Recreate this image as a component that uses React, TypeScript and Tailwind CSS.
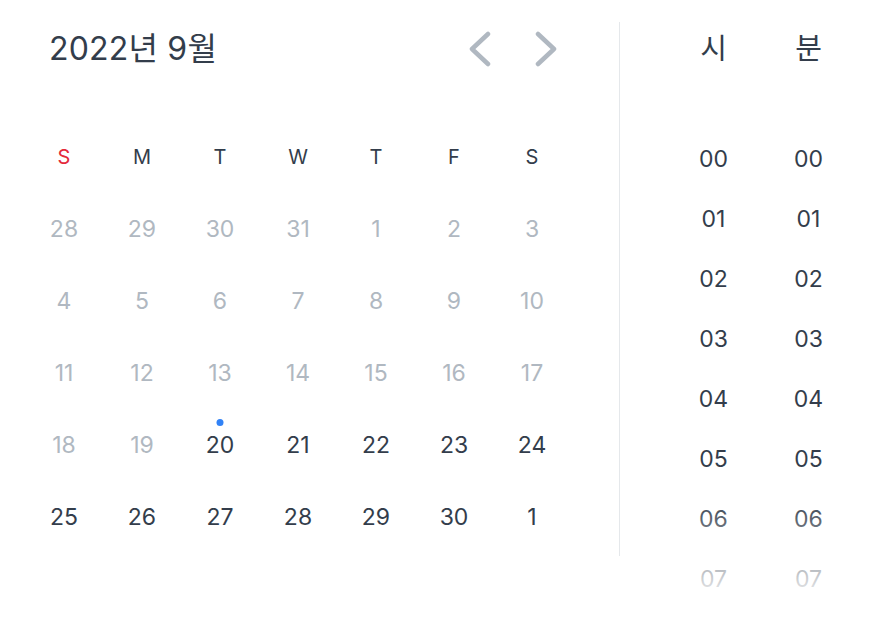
import React from "react";

const weekdays = ["S", "M", "T", "W", "T", "F", "S"];
const rows: { d: number; muted: boolean }[][] = [
  [28, 29, 30, 31, 1, 2, 3].map((d) => ({ d, muted: true })),
  [4, 5, 6, 7, 8, 9, 10].map((d) => ({ d, muted: true })),
  [11, 12, 13, 14, 15, 16, 17].map((d) => ({ d, muted: true })),
  [18, 19, 20, 21, 22, 23, 24].map((d, i) => ({ d, muted: i < 2 })),
  [25, 26, 27, 28, 29, 30, 1].map((d) => ({ d, muted: false })),
];
const times = ["00", "01", "02", "03", "04", "05", "06", "07"];

const font = { fontFamily: "Inter, 'Noto Sans CJK KR', sans-serif" };

export default function App() {
  return (
    <div className="relative h-[644px] w-[878px] overflow-hidden bg-white text-[#333d4b]" style={font}>
      <div className="flex">
        {/* Calendar */}
        <div className="w-[619px] pl-[25px] pt-[22px]">
          <div className="flex h-[54px] w-[546px] items-center">
            <div className="pl-[24px] text-[32px] tracking-[0.2px]">2022년 9월</div>
            <div className="ml-auto flex items-center gap-[44px] pr-[14px]">
              <svg width="22" height="36" viewBox="0 0 22 36" fill="none">
                <path d="M19 3 L3 18 L19 33" stroke="#b0b8c1" strokeWidth="4.5" strokeLinecap="round" strokeLinejoin="round" />
              </svg>
              <svg width="22" height="36" viewBox="0 0 22 36" fill="none">
                <path d="M3 3 L19 18 L3 33" stroke="#b0b8c1" strokeWidth="4.5" strokeLinecap="round" strokeLinejoin="round" />
              </svg>
            </div>
          </div>
          <div className="h-[45px]" />
          <div className="grid w-[546px] grid-cols-7">
            {weekdays.map((w, i) => (
              <div
                key={i}
                className={`flex h-[72px] items-center justify-center text-[20px] ${i === 0 ? "text-[#e42939]" : "text-[#333d4b]"}`}
              >
                {w}
              </div>
            ))}
            {rows.flat().map((c, i) => (
              <div
                key={i}
                className={`relative flex h-[72px] items-center justify-center text-[23px] ${c.muted ? "text-[#b0b8c1]" : "text-[#333d4b]"}`}
              >
                {c.d === 20 && !c.muted && (
                  <span className="absolute left-1/2 top-[10px] h-[7px] w-[7px] -translate-x-1/2 rounded-full bg-[#3182f6]" />
                )}
                {c.d}
              </div>
            ))}
          </div>
        </div>
        {/* Divider */}
        <div className="mt-[22px] h-[534px] w-px bg-[#e5e8eb]" />
        {/* Time */}
        <div className="relative flex pl-[46px] pt-[22px]">
          {["시", "분"].map((h) => (
            <div key={h} className="flex w-[95px] flex-col items-center">
              <div className="flex h-[54px] items-center text-[29px]">{h}</div>
              <div className="h-[53px]" />
              {times.map((t) => (
                <div key={t} className="flex h-[60px] items-center text-[23px]">
                  {t}
                </div>
              ))}
            </div>
          ))}
        </div>
      </div>
      <div className="absolute left-[620px] right-0 top-[497px] bottom-0 bg-[linear-gradient(to_bottom,rgba(255,255,255,0),#ffffff_109px)]" />
    </div>
  );
}
